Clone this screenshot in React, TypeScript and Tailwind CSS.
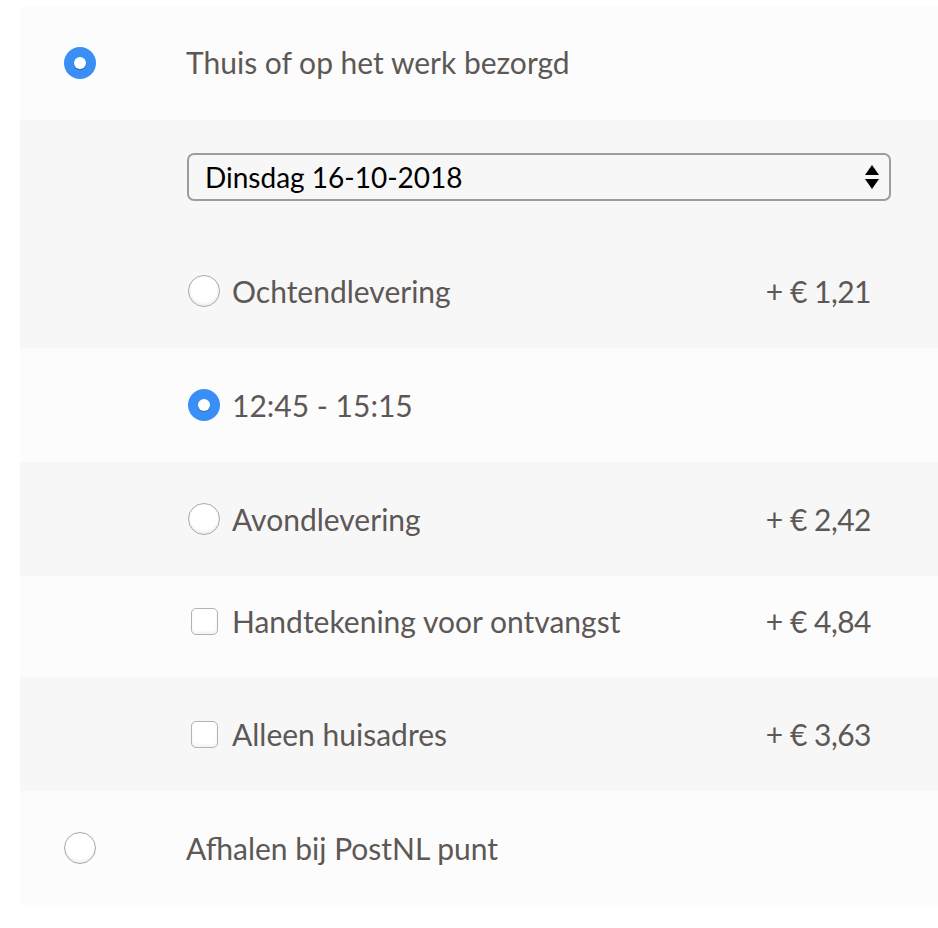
import { ReactNode } from 'react'

const font = { fontFamily: 'Lato, "Open Sans", sans-serif' }

function Radio({ checked }: { checked?: boolean }) {
  if (checked) {
    return (
      <span className="flex h-8 w-8 shrink-0 items-center justify-center rounded-full bg-[#3a8ff7]">
        <span className="h-3 w-3 rounded-full bg-white shadow-[0_1px_1px_rgba(0,0,0,0.25)]" />
      </span>
    )
  }
  return (
    <span className="block h-8 w-8 shrink-0 rounded-full border border-[#a9a9a9] bg-white shadow-[inset_0_-2px_3px_rgba(0,0,0,0.08)]" />
  )
}

function Checkbox() {
  return (
    <span className="block h-[27px] w-[27px] shrink-0 rounded-[5px] border border-[#b3b3b3] bg-white shadow-[inset_0_-2px_3px_rgba(0,0,0,0.06)]" />
  )
}

function Row({ shade, h = 'h-[114px]', children }: { shade: 'light' | 'dark'; h?: string; children: ReactNode }) {
  return (
    <div className={`flex items-center ${h} ${shade === 'light' ? 'bg-[#fcfcfc]' : 'bg-[#f7f7f7]'}`}>
      {children}
    </div>
  )
}

function SubOption({ control, label, price }: { control: ReactNode; label: string; price?: string }) {
  return (
    <div className="flex flex-1 items-center pl-[168px] pr-[67px]">
      <div className="flex w-[44px] shrink-0 items-center">{control}</div>
      <span className="flex-1">{label}</span>
      {price && <span className="tracking-[-0.5px]">{price}</span>}
    </div>
  )
}

export default function App() {
  return (
    <div className="min-h-[928px] bg-white pt-[6px] pl-5 text-[30px] text-[#5d5855]" style={font}>
      <Row shade="light">
        <div className="flex w-[166px] shrink-0 pl-[44px]">
          <Radio checked />
        </div>
        <span className="-mt-[2px]">Thuis of op het werk bezorgd</span>
      </Row>
      <Row shade="dark">
        <div className="flex flex-1 items-center self-start pt-[33px] pl-[167px] pr-[47px]">
          <div className="relative flex h-12 flex-1 items-center rounded-[7px] border-2 border-[#9d9d9d] bg-[#f7f7f7] pl-4 text-[28px] text-black">
            <span>Dinsdag 16-10-2018</span>
            <svg className="absolute right-[9px] top-1/2 -translate-y-1/2" width="16" height="28" viewBox="0 0 16 28">
              <path d="M8 2 L15 12 L1 12 Z" fill="#000" />
              <path d="M1 16 L15 16 L8 26 Z" fill="#000" />
            </svg>
          </div>
        </div>
      </Row>
      <Row shade="dark">
        <SubOption control={<Radio />} label="Ochtendlevering" price="+ € 1,21" />
      </Row>
      <Row shade="light">
        <SubOption control={<Radio checked />} label="12:45 - 15:15" />
      </Row>
      <Row shade="dark">
        <SubOption control={<Radio />} label="Avondlevering" price="+ € 2,42" />
      </Row>
      <Row shade="light" h="h-[101px]">
        <div className="-mt-[10px] flex flex-1">
          <SubOption control={<div className="pl-[3px]"><Checkbox /></div>} label="Handtekening voor ontvangst" price="+ € 4,84" />
        </div>
      </Row>
      <Row shade="dark">
        <SubOption control={<div className="pl-[3px]"><Checkbox /></div>} label="Alleen huisadres" price="+ € 3,63" />
      </Row>
      <Row shade="light">
        <div className="flex w-[166px] shrink-0 pl-[44px]">
          <Radio />
        </div>
        <span>Afhalen bij PostNL punt</span>
      </Row>
    </div>
  )
}
